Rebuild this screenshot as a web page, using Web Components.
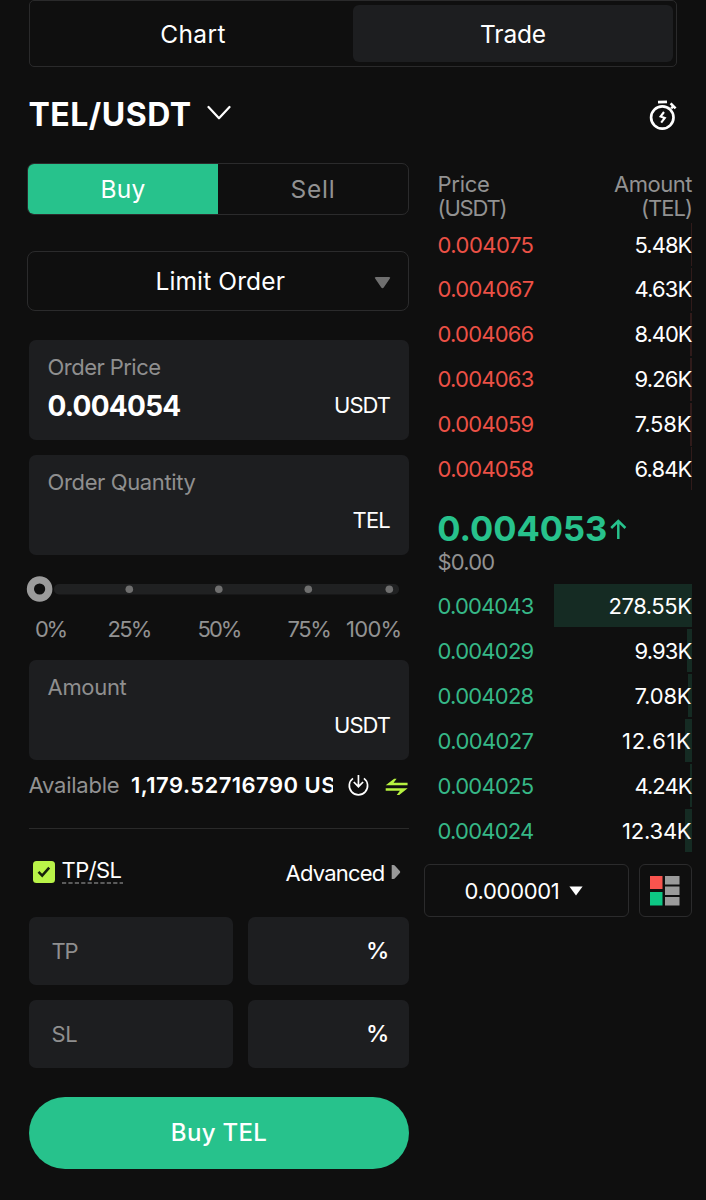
<!DOCTYPE html>
<html lang="en">
<head>
<meta charset="utf-8">
<title>TEL/USDT</title>
<style>
html,body{margin:0;background:#0f0f0f}
body{font-family:Inter,"Liberation Sans",sans-serif;font-optical-sizing:none;color:#fff;width:706px;height:1200px;overflow:hidden}
</style>
</head>
<body>
<trade-app></trade-app>
<script>
const define = (name, html, setup) => customElements.define(name, class extends HTMLElement {
  connectedCallback() {
    if (this.shadowRoot) return;
    const t = document.createElement('template');
    t.innerHTML = html(this);
    this.attachShadow({mode: 'open'}).append(t.content.cloneNode(true));
    if (setup) setup(this);
  }
});

/* One line of text, tracked so that it spans the width given in "w". */
define('ui-text', el => `<style>
:host{display:block;flex:none;white-space:pre;width:${el.getAttribute('w')}px;height:${el.getAttribute('h') || 24}px;line-height:${el.getAttribute('h') || 24}px;font-size:${el.getAttribute('s') || 22}px;font-weight:${el.getAttribute('b') || 400}}
</style><span><slot></slot></span>`, el => {
  const span = el.shadowRoot.querySelector('span');
  const size = +(el.getAttribute('s') || 22);
  const fit = +el.getAttribute('w') + size * 0.04;
  const n = el.textContent.length;
  el.style.letterSpacing = ((fit - span.getBoundingClientRect().width) / n).toFixed(3) + 'px';
  span.style.marginLeft = (-size * 0.02) + 'px';
});

define('view-tabs', () => `<style>
:host{display:flex;box-sizing:border-box;width:648px;height:67px;margin:0 0 0 29px;border:1px solid #2a2a2b;border-radius:5px;padding:4px 3px}
div{flex:1;display:flex;align-items:center;justify-content:center;border-radius:6px}
.on{background:#1d1e20}
</style><div><ui-text w="64.5" s="24.5">Chart</ui-text></div><div class="on"><ui-text w="65" s="24.5">Trade</ui-text></div>`);

define('pair-header', () => `<style>
:host{display:flex;align-items:center;width:648px;height:48px;margin:24px 0 24px 29px}
.c{margin:-4px 0 0 16px}.t{margin:-1px -1px 0 auto}
</style><ui-text w="162" s="32" h="40" b="700">TEL/USDT</ui-text>
<svg class="c" width="24" height="16" viewBox="0 0 24 16" fill="none" stroke="#fff" stroke-width="2.2" stroke-linecap="round" stroke-linejoin="round"><path d="M1.5 2 12 13.3 22.5 2"/></svg>
<svg class="t" width="30" height="32" viewBox="0 0 30 32" fill="none" stroke="#fff"><circle cx="14.3" cy="18.5" r="11.2" stroke-width="2.7"/><path d="M10 3.2l9-.4" stroke-width="2.8"/><path d="M22.6 4.3l5 5M23.2 9.4l2.2-2.2" stroke-width="2.6"/><path d="M16 13l-3.4 4.5 4.2 1.5-3.6 4.7" stroke-width="2.1"/></svg>`);

define('side-switch', () => `<style>
:host{display:flex;box-sizing:border-box;width:382px;height:52px;margin-left:-2px;border:1px solid #2b2b2c;border-radius:7px;overflow:hidden}
div{flex:1;display:flex;align-items:center;justify-content:center;color:#929292}
.on{background:#27c28c;color:#fff}
</style><div class="on"><ui-text w="44" s="24.5">Buy</ui-text></div><div><ui-text w="44" s="24.5">Sell</ui-text></div>`);

define('order-type', () => `<style>
:host{display:flex;align-items:center;box-sizing:border-box;width:382px;height:60px;margin:36px 0 29px -2px;border:1px solid #2b2b2c;border-radius:8px;padding:0 17px 0 128px;justify-content:space-between}
svg{margin-top:3px}
</style><ui-text w="128.5" s="24.5">Limit Order</ui-text><svg width="17" height="13" viewBox="0 0 17 13"><path d="M2 1h13q2 0 .7 1.8l-5.8 8.5q-1.4 1.7-2.8 0L1.3 2.8Q0 1 2 1z" fill="#6f6f6f"/></svg>`);

define('amount-field', el => `<style>
:host{display:block;box-sizing:border-box;width:380px;height:100px;background:#1d1e20;border-radius:7px;padding:15px 19.5px 15px 19px}
.l{color:#8f8f8f}
.r{display:flex;justify-content:space-between;align-items:center;height:28px;margin-top:12px}
.v{padding-top:1px}
</style><div class="l"><ui-text w="${el.getAttribute('lw')}">${el.getAttribute('label')}</ui-text></div>
<div class="r"><span class="v">${el.hasAttribute('value') ? `<ui-text w="132" s="28" h="28" b="700">${el.getAttribute('value')}</ui-text>` : ''}</span><ui-text w="${el.getAttribute('uw')}">${el.getAttribute('unit')}</ui-text></div>`);

define('percent-slider', () => `<style>
:host{display:block;width:384px;margin:20px 0 0 -4px}
svg{display:block;margin-left:1px}
.m{display:flex;color:#929292;padding:14px 0 0 10.5px}
</style><svg width="384" height="28" viewBox="26 575 384 28"><rect x="54" y="584" width="345" height="10.5" rx="5" fill="#202122"/><g fill="#6f6f6f"><circle cx="129.3" cy="589.3" r="3.8"/><circle cx="218.8" cy="589.3" r="3.8"/><circle cx="308.3" cy="589.3" r="3.8"/><circle cx="389.3" cy="589.3" r="3.8"/></g><circle cx="39.6" cy="589" r="9.2" fill="#0f0f0f" stroke="#9b9b9b" stroke-width="7.2"/></svg>
<div class="m"><ui-text w="29.5">0%</ui-text><ui-text w="42" style="margin-left:43px">25%</ui-text><ui-text w="42" style="margin-left:48px">50%</ui-text><ui-text w="42" style="margin-left:48px">75%</ui-text><ui-text w="54.5" style="margin-left:16.5px">100%</ui-text></div>`);

define('balance-row', () => `<style>
:host{display:flex;align-items:center;width:380px;height:26px;margin-top:12px}
.l{color:#929292}.v{width:203px;padding-left:2px;margin-left:10.5px;overflow:hidden}
.d{margin:0 0 0 15px}.s{margin:4px 0 0 16px}
</style><ui-text class="l" w="90">Available</ui-text><div class="v"><ui-text w="204" b="600">1,179.52716790 US</ui-text></div>
<svg class="d" width="21" height="22" viewBox="0 0 21 22" fill="none" stroke="#fff" stroke-width="1.7"><path d="M5 4.3a9.2 9.2 0 1 0 11 0M10.5 1v11.5M5.8 8l4.7 4.7L15.2 8"/></svg>
<svg class="s" width="24" height="18" viewBox="0 0 24 18" fill="#b6f240"><path d="M.7 7.3 9.2.7h2.5L8.6 4.8h14.1v2.5zM.7 10.2h22.1l-8.5 6.8h-2.5l3.2-4.2H.7z"/></svg>`);

define('tpsl-row', () => `<style>
:host{display:flex;box-sizing:border-box;width:380px;height:89px;margin-top:30px;border-top:1px solid #2a2a2a}
.k{display:block;margin:31.5px 7px 0 4px}
.t{margin-top:29px;height:25px;align-self:flex-start}
.u{display:block;margin-top:0}
.a{margin:32px 0 0 auto}.g{margin:36px 8px 0 7px}
</style><svg class="k" width="22" height="22" viewBox="0 0 22 22"><rect width="22" height="22" rx="3.5" fill="#b9f348"/><path d="M5.5 10.8l3.7 3.8 7-8" fill="none" stroke="#17200c" stroke-width="2.5"/></svg>
<div class="t"><ui-text w="59">TP/SL</ui-text><svg class="u" width="61" height="2"><path d="M0 1h61" stroke="#757575" stroke-width="1.3" stroke-dasharray="4.2 2.2"/></svg></div>
<ui-text class="a" w="98">Advanced</ui-text><svg class="g" width="10" height="14" viewBox="0 0 10 14"><path d="M.7 0h1.8Q3.5 0 4.2.9l4.6 5q1 1.1 0 2.2l-4.6 5q-.7.9-1.7.9H.7z" fill="#999"/></svg>`);

define('trigger-row', el => `<style>
:host{display:grid;grid-template-columns:204px 161px;column-gap:15px;width:380px;height:68px;margin-bottom:15px}
div{display:flex;align-items:center;background:#1d1e20;border-radius:7px}
.l{color:#8f8f8f;padding-left:23px}.p{justify-content:flex-end;padding-right:23.5px}
</style><div class="l"><ui-text w="25">${el.getAttribute('label')}</ui-text></div><div class="p"><ui-text w="19" s="23.5" b="500">%</ui-text></div>`);

define('submit-button', () => `<style>
:host{display:flex;align-items:center;justify-content:center;width:380px;height:72px;margin-top:29px;border-radius:36px;background:#27c28c}
</style><ui-text w="95.5" s="24" b="500">Buy TEL</ui-text>`);

define('order-form', () => `<style>
:host{display:block;width:380px}
amount-field+amount-field{margin-top:15px}
percent-slider+amount-field{margin-top:19px}
</style><side-switch></side-switch><order-type></order-type>
<amount-field label="Order Price" lw="112" value="0.004054" unit="USDT" uw="55"></amount-field>
<amount-field label="Order Quantity" lw="147" unit="TEL" uw="36.5"></amount-field>
<percent-slider></percent-slider>
<amount-field label="Amount" lw="78" unit="USDT" uw="55"></amount-field>
<balance-row></balance-row><tpsl-row></tpsl-row>
<trigger-row label="TP"></trigger-row><trigger-row label="SL"></trigger-row>
<submit-button></submit-button>`);

define('book-row', el => {
  const d = +el.getAttribute('depth'), ask = el.hasAttribute('ask');
  return `<style>
:host{display:flex;box-sizing:border-box;align-items:center;justify-content:space-between;height:43px;margin-bottom:${ask ? 1.9 : 2}px;width:254px;padding-right:1px;background:linear-gradient(${ask ? '#301b1a,#301b1a' : '#152b23,#152b23'}) right / ${d}px 100% no-repeat}
.p{color:${ask ? '#ec5146' : '#36b887'}}
</style><ui-text class="p" w="95">${el.getAttribute('price')}</ui-text><ui-text w="${el.getAttribute('aw') || 56}">${el.getAttribute('amount')}</ui-text>`;
});

define('last-price', () => `<style>
:host{display:block;height:76px;margin-top:18px}
div{display:flex;align-items:center;height:42px;color:#27c28c}
svg{margin-left:3px}
.d{display:block;color:#929292;height:24px;margin-top:-.5px}
</style><div><ui-text w="168.5" s="34.5" h="42" b="700">0.004053</ui-text><svg width="17" height="20" viewBox="0 0 17 20" fill="none" stroke="#27c28c" stroke-width="2.5"><path d="M8.3 20V2M1.2 9l7.1-7 7.1 7"/></svg></div><ui-text class="d" w="56">$0.00</ui-text>`);

define('book-tools', () => `<style>
:host{display:flex;justify-content:space-between;width:267.5px;margin:12px 0 0 -14px}
div{box-sizing:border-box;height:53px;border:1px solid #2b2b2c;border-radius:6px;display:flex;align-items:center}
.s{width:204.5px;padding-left:40px}.s svg{margin:1px 0 0 10px}
.i{width:52.5px;justify-content:center}
</style><div class="s"><ui-text w="94">0.000001</ui-text><svg width="14" height="10"><path d="M.4.5h13.2L7 9.5z" fill="#fff"/></svg></div>
<div class="i"><svg width="30" height="30"><path d="M0 0h12.5v13H0z" fill="#f9544e"/><path d="M0 16h12.5v13.5H0z" fill="#0dc784"/><path d="M15 0h14.5v8.5H15zM15 10.5h14.5V19H15zM15 21h14.5v8.5H15z" fill="#9b9b9b"/></svg></div>`);

define('order-book', () => `<style>
:host{display:block;width:254px}
.h{display:flex;justify-content:space-between;color:#929292;padding:9px 0 3px;width:253.5px}
.r{display:flex;flex-direction:column;align-items:flex-end}
</style><div class="h"><div><ui-text w="51">Price</ui-text><ui-text w="68">(USDT)</ui-text></div><div class="r"><ui-text w="77">Amount</ui-text><ui-text w="50">(TEL)</ui-text></div></div>
<book-row ask price="0.004075" amount="5.48K" depth="1"></book-row>
<book-row ask price="0.004067" amount="4.63K" depth="1"></book-row>
<book-row ask price="0.004066" amount="8.40K" depth="2"></book-row>
<book-row ask price="0.004063" amount="9.26K" depth="2"></book-row>
<book-row ask price="0.004059" amount="7.58K" depth="2"></book-row>
<book-row ask price="0.004058" amount="6.84K" depth="1.5"></book-row>
<last-price></last-price>
<book-row price="0.004043" amount="278.55K" aw="82" depth="138"></book-row>
<book-row price="0.004029" amount="9.93K" depth="5"></book-row>
<book-row price="0.004028" amount="7.08K" depth="4"></book-row>
<book-row price="0.004027" amount="12.61K" aw="68.5" depth="7"></book-row>
<book-row price="0.004025" amount="4.24K" depth="2"></book-row>
<book-row price="0.004024" amount="12.34K" aw="68.5" depth="7"></book-row>
<book-tools></book-tools>`);

define('trade-app', () => `<style>
:host{display:block}
main{display:flex;padding-left:29px;gap:29px;align-items:flex-start}
</style><view-tabs></view-tabs><pair-header></pair-header><main><order-form></order-form><order-book></order-book></main>`);
</script>
</body>
</html>
